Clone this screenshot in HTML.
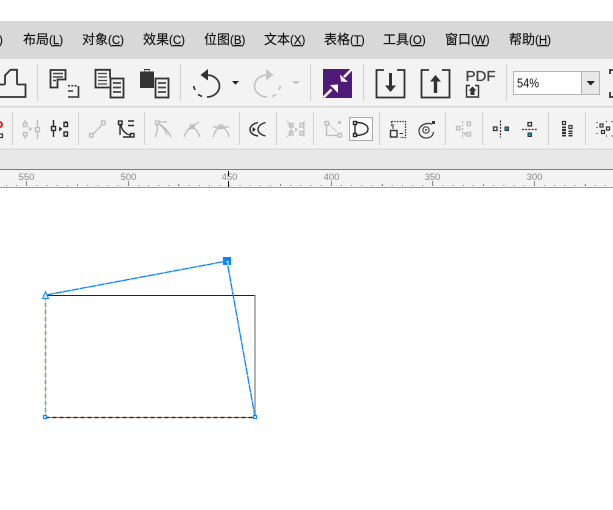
<!DOCTYPE html>
<html><head><meta charset="utf-8"><style>
html,body{margin:0;padding:0;background:#fff;width:613px;height:510px;overflow:hidden}
svg{display:block}
.m{font-family:"Liberation Sans","Noto Sans CJK SC",sans-serif;font-size:13px;fill:#111;stroke:#111;stroke-width:.15}
.l{font-size:11.5px}
.r{font-family:"Liberation Sans",sans-serif;font-size:9.5px;fill:#888;text-anchor:middle}
.kt{fill:none;stroke:#333;stroke-width:1.8}
.g{fill:none;stroke:#bcbcbc;stroke-width:1.3}
.d{fill:none;stroke:#2a2a2a;stroke-width:1.4}
.sep{stroke:#d2d2d2;stroke-width:1}
</style></head><body>
<svg width="613" height="510" viewBox="0 0 613 510" xmlns="http://www.w3.org/2000/svg">
<rect width="613" height="510" fill="#fff"/>
<rect y="21" width="613" height="38" fill="#d8d8d8"/>
<rect y="59" width="613" height="47" fill="#f3f3f3"/>
<rect y="106" width="613" height="1.5" fill="#d9d9d9"/>
<rect y="107.5" width="613" height="41" fill="#f3f3f3"/>
<rect y="148.5" width="613" height="1.5" fill="#d9d9d9"/>
<rect y="150" width="613" height="19" fill="#e8e8e8"/>
<rect y="169" width="613" height="1" fill="#00a8ee"/>
<rect y="170" width="613" height="17" fill="#f3f3f3"/>
<rect y="187" width="613" height="1" fill="#9c9c9c"/>

<!-- menu -->
<text class="m l" x="-1" y="44">)</text>
<text class="m" x="23" y="44">布局<tspan class="l" dx="0">(<tspan text-decoration="underline">L</tspan>)</tspan></text>
<text class="m" x="82" y="44">对象<tspan class="l">(<tspan text-decoration="underline">C</tspan>)</tspan></text>
<text class="m" x="143" y="44">效果<tspan class="l">(<tspan text-decoration="underline">C</tspan>)</tspan></text>
<text class="m" x="204" y="44">位图<tspan class="l">(<tspan text-decoration="underline">B</tspan>)</tspan></text>
<text class="m" x="264" y="44">文本<tspan class="l">(<tspan text-decoration="underline">X</tspan>)</tspan></text>
<text class="m" x="324" y="44">表格<tspan class="l">(<tspan text-decoration="underline">T</tspan>)</tspan></text>
<text class="m" x="383" y="44">工具<tspan class="l">(<tspan text-decoration="underline">O</tspan>)</tspan></text>
<text class="m" x="445" y="44">窗口<tspan class="l">(<tspan text-decoration="underline">W</tspan>)</tspan></text>
<text class="m" x="509" y="44">帮助<tspan class="l">(<tspan text-decoration="underline">H</tspan>)</tspan></text>

<!-- separators -->
<g class="sep">
<path d="M37.5 64V101M180.5 64V101M310.5 64V101M363.5 64V101M506.5 64V101"/>
<path d="M12.5 112V145M78.5 112V145M144.5 112V145M239.5 112V145M276.5 112V145M313.5 112V145M379.5 112V145M445.5 112V145M482.5 112V145M548.5 112V145M585.5 112V145"/>
</g>

<!-- print -->
<path class="kt" d="M5 84.500V75.500L10.500 69.800H17V84.500M0 84.500H5M17 84.500H25.500V97H0"/>
<!-- page with dotted page -->
<path class="kt" d="M50.500 70H65.500V79.500H57.500V87.500H50.500Z"/>
<path d="M53 73.500H63M53 77H63M53 80.500H56" stroke="#444" fill="none" stroke-width="1.400"/>
<path d="M68 85.800H78" fill="none" stroke="#333" stroke-width="1.500" stroke-dasharray="2 1.300"/>
<path d="M78.500 86V97H68M68 91H73" fill="none" stroke="#333" stroke-width="1.600"/>
<!-- copy -->
<path class="kt" d="M110 87.500H95.500V69.800H110V78"/>
<path d="M98 73.500H107M98 77H107M98 80.500H107M98 84H107" stroke="#444" fill="none" stroke-width="1.300"/>
<rect x="110.500" y="78.500" width="13" height="19" class="kt"/>
<path d="M113 83H121M113 87.500H121M113 92H121" stroke="#444" fill="none" stroke-width="1.800"/>
<!-- paste -->
<path d="M140 71.500H144V69H150V71.500H154V88H140Z" fill="#333"/>
<rect x="144.500" y="70" width="5" height="1.500" fill="#ddd"/>
<rect x="155.500" y="78.500" width="13" height="19" class="kt"/>
<path d="M158 83H166M158 87.500H166M158 92H166" stroke="#444" fill="none" stroke-width="1.800"/>

<!-- undo -->
<path d="M207 75A12.500 11 0 0 1 207 97" fill="none" stroke="#333" stroke-width="1.700"/>
<path d="M202 96.500L198 94.500M195 90L193.500 86" fill="none" stroke="#333" stroke-width="1.700"/>
<path d="M208 69L200.500 75L208 80.500Z" fill="#333"/>
<path d="M232 81H239L235.500 84.800Z" fill="#222"/>
<!-- redo -->
<path d="M267 75A12.500 11 0 0 0 267 97" fill="none" stroke="#c4c4c4" stroke-width="1.700"/>
<path d="M272 96.500L276 94.500M279 90L280.500 86" fill="none" stroke="#c4c4c4" stroke-width="1.700"/>
<path d="M266 69L273.500 75L266 80.500Z" fill="#c4c4c4"/>
<path d="M292 81H300L296 84.800Z" fill="#c8c8c8"/>

<!-- purple -->
<rect x="323" y="69" width="29" height="29" fill="#4f1a78"/>
<path d="M352 69L344 77M331.500 89.500L323.500 97.500" stroke="#fff" stroke-width="2.500" fill="none"/>
<path d="M341 81.500L340 74.500L348 82Z" fill="#fff"/>
<path d="M338 84.500L330 85L338 93Z" fill="#fff"/>

<!-- import/export -->
<path d="M384 70H376.500V97.500H404.500V70H397" fill="none" stroke="#333" stroke-width="1.800"/>
<path d="M390.500 73V88" stroke="#333" stroke-width="3" fill="none"/>
<path d="M385 85.500H396L390.500 92Z" fill="#333"/>
<path d="M429 70H421.500V97.500H449.500V70H442" fill="none" stroke="#333" stroke-width="1.800"/>
<path d="M435.500 80V93" stroke="#333" stroke-width="3.400" fill="none"/>
<path d="M430 81.500H441L435.500 75Z" fill="#333"/>
<!-- PDF -->
<text x="465.500" y="81" font-family="'Liberation Sans',sans-serif" font-size="15" fill="#444" stroke="#444" stroke-width=".35" textLength="30" lengthAdjust="spacingAndGlyphs">PDF</text>
<path d="M470 85.500H466.500V97H478.500V85.500H475" fill="none" stroke="#333" stroke-width="1.400"/>
<path d="M472.500 86.500L468.500 90.500H470.500V95H474.500V90.500H476.500Z" fill="#333"/>

<!-- combo -->
<rect x="513.500" y="71.500" width="86" height="23" fill="#e8e8e8" stroke="#b5b5b5"/>
<rect x="514" y="72" width="67" height="22" fill="#fff"/>
<path d="M581.500 72V94" stroke="#b5b5b5"/>
<text x="517" y="87.500" font-family="'Liberation Sans',sans-serif" font-size="13" fill="#111" textLength="22" lengthAdjust="spacingAndGlyphs">54%</text>
<path d="M586.500 81H595L590.700 85.500Z" fill="#222"/>
<path d="M613 70H610V74M610 92V97H613" fill="none" stroke="#333" stroke-width="1.800"/>

<!-- toolbar 2 -->
<circle cx="-.5" cy="124.500" r="2.500" fill="none" stroke="#e8202a" stroke-width="2"/>
<rect x="-1" y="134" width="3.500" height="3.500" fill="none" stroke="#333" stroke-width="1.200"/>

<!-- align nodes grey -->
<g class="g">
<rect x="23.500" y="123" width="3.500" height="3.500"/><rect x="23.500" y="132.500" width="3.500" height="3.500"/>
<path d="M25 120V123M25 136V139M37.500 120V139"/><rect x="35.500" y="127.500" width="4" height="4" fill="#f3f3f3"/>
</g>
<path d="M29 126.500L32.500 129L29 131.500Z" fill="#c6c6c6"/>
<g class="d">
<path d="M53.500 120V137M66 121V123M66 136V137"/>
<rect x="51.500" y="126.500" width="4" height="4" fill="#f3f3f3"/>
<rect x="64" y="122.500" width="3.500" height="4"/><rect x="64" y="132" width="3.500" height="4"/>
</g>
<path d="M59 126.500L62.500 129L59 131.500Z" fill="#333"/>

<!-- line node grey -->
<g class="g"><path d="M93 134L102 125"/><rect x="89.500" y="133.500" width="3.500" height="3.500"/><rect x="101.500" y="121" width="3.500" height="3.500"/></g>
<!-- curve node -->
<g class="d">
<rect x="118.500" y="121" width="3.500" height="3.500"/><rect x="130.500" y="133.500" width="3.500" height="3.500"/>
<path d="M120 125V135M121 125C122 131 126 134 130 135M123 137H130M128 121H134M128 125.500H134"/>
</g>
<!-- grey curve icons -->
<g class="g">
<rect x="155.500" y="121" width="3.500" height="3.500"/>
<path d="M159 122H167M159 124C165 127 169 133 171 137M157 125C158 131 156 135 155 137M160 125C164 128 166 131 167 135"/>
<rect x="190.500" y="125" width="3.500" height="3.500"/>
<path d="M184 137C186 131 190 128 192 127C195 128 198 132 200 137M188 129L199 122"/>
<rect x="219" y="125" width="3.500" height="3.500"/>
<path d="M213 137C215 131 218 127 221 127C224 127 228 131 229 137M213 127H229"/>
</g>
<!-- cusp -->
<g class="d">
<path d="M258 122.500C252 124 250 127 250 129.500C250 132 252 135 258 136"/>
<path d="M265.500 122.500C260 124 258 127 258 129.500C258 132.500 261 135 265.500 136"/>
</g>
<path d="M252.500 127L256 129.500L252.500 132Z" fill="#333"/>
<!-- extend grey -->
<g class="g">
<path d="M287 121L291 125V133L287 137M304 121V137" stroke-width="1"/>
<rect x="289.500" y="123.500" width="3.500" height="3.500"/><rect x="289.500" y="131.500" width="3.500" height="3.500"/>
<rect x="300" y="123.500" width="3.500" height="3.500"/><rect x="300" y="131.500" width="3.500" height="3.500"/>
</g>
<path d="M295 127L298 129.500L295 132Z" fill="#c6c6c6"/>
<!-- corner grey -->
<g class="g">
<rect x="325" y="121.500" width="3.500" height="3.500"/><rect x="338" y="133.500" width="3.500" height="3.500"/>
<path d="M326.500 125V135.500H338"/><path d="M329 124L338 133" stroke-dasharray="1.500 1.500"/>
</g>
<rect x="338" y="121" width="3" height="3" fill="#c6c6c6"/>
<!-- active D -->
<rect x="349.500" y="117.500" width="23" height="23" fill="#f9f9f9" stroke="#aaa"/>
<g class="d">
<rect x="353.500" y="121.500" width="3" height="3"/><rect x="353.500" y="133.500" width="3" height="3"/>
<path d="M355 124.500V133.500M356.500 122.500C363 122.500 368 125 368 129C368 133 363 135 356.500 135.500"/>
</g>
<!-- transform bbox -->
<path d="M391.500 121.500H405.500V137.500H400" fill="none" stroke="#333" stroke-width="1.300" stroke-dasharray="1.500 1.200"/>
<path d="M391.500 121.500V127" fill="none" stroke="#333" stroke-width="1.300" stroke-dasharray="1.500 1.200"/>
<rect x="390.500" y="130.500" width="6.500" height="6.500" fill="none" stroke="#333" stroke-width="1.400"/>
<path d="M393 124V129M399.500 133.500H403" stroke="#333" stroke-width="1" fill="none"/>
<!-- rotate -->
<path d="M432 124C425 122 419 126 419 131C419 135 422 138 426 138C430 138 433 136 433.500 132" fill="none" stroke="#444" stroke-width="1.300"/>
<circle cx="426" cy="130" r="3.200" fill="none" stroke="#444" stroke-width="1.200"/>
<circle cx="426" cy="130" r="1" fill="#444"/>
<rect x="432" y="121" width="3" height="3" fill="#333"/>
<!-- mirror grey -->
<g class="g">
<rect x="456.500" y="126.500" width="3.500" height="3.500"/>
<rect x="467" y="122" width="3.500" height="3.500"/><rect x="467" y="132.500" width="3.500" height="3.500"/>
<path d="M462.500 121V139" stroke-dasharray="2 1.500"/>
</g>
<path d="M466 131.500V136L463 133.800Z" fill="#c6c6c6"/>
<!-- reflect H -->
<rect x="493.500" y="127" width="3.500" height="3.500" fill="none" stroke="#333" stroke-width="1.300"/>
<rect x="505" y="127" width="3.500" height="3.500" fill="#00a0d8" stroke="#333" stroke-width="1"/>
<path d="M500.500 120.500V137.500" stroke="#333" stroke-width="1.200" stroke-dasharray="2 1.200"/>
<!-- reflect V -->
<rect x="528" y="122.500" width="3.500" height="3.500" fill="none" stroke="#333" stroke-width="1.300"/>
<rect x="528" y="133" width="3.500" height="3.500" fill="#00a0d8" stroke="#333" stroke-width="1"/>
<path d="M522 129.500H538" stroke="#333" stroke-width="1.200" stroke-dasharray="2 1.200"/>
<!-- stretch -->
<rect x="562.500" y="121.500" width="3" height="3" fill="none" stroke="#333" stroke-width="1.200"/>
<rect x="569" y="125.500" width="3" height="3" fill="none" stroke="#333" stroke-width="1.200"/>
<path d="M562 126.500H566V136.500H562ZM568.500 130.500H572.500V136.500H568.500Z" fill="#333"/>
<path d="M562 128.500H566M562 131.500H566M562 134.500H566M568.500 132.500H572.500M568.500 134.500H572.500" stroke="#f3f3f3" stroke-width="0.700"/>
<!-- scatter -->
<g fill="none" stroke="#333" stroke-width="1.200">
<rect x="600" y="124" width="3" height="3"/><rect x="606.500" y="127" width="3" height="3"/><rect x="601.500" y="130.500" width="3" height="3"/>
<path d="M597 122V123M597 127V128M597 133V134M606 121.500H607M611.500 121.500H612.500M611.500 136H612.500M606 136H607" stroke-width="1.200"/>
</g>

<!-- ruler -->
<path d="M0 185.500H613" stroke="#8a8a8a" stroke-width="1" stroke-dasharray="1 9.150" stroke-dashoffset="-6"/>
<path d="M26.500 181V186M128.500 181V186M331.500 181V186M432.500 181V186M534.500 181V186M77.500 184V186M178.500 184V186M280.500 184V186M382.500 184V186M483.500 184V186M585.500 184V186" stroke="#8a8a8a" stroke-width="1" fill="none"/>
<text class="r" x="26.500" y="180">550</text>
<text class="r" x="128.500" y="180">500</text>
<text class="r" x="229.500" y="180">450</text>
<text class="r" x="331.500" y="180">400</text>
<text class="r" x="432.500" y="180">350</text>
<text class="r" x="534.500" y="180">300</text>
<path d="M228.500 171V176M228.500 181V187" stroke="#111" stroke-width="1" fill="none"/>

<!-- canvas -->
<path d="M45.500 295.500H255.500" stroke="#222" stroke-width="1" fill="none"/>
<path d="M255 295.500V417" stroke="#999" stroke-width="1.500" fill="none"/>
<path d="M45.500 296V417" stroke="#a8e6bb" stroke-width="1.500" fill="none"/>
<path d="M45.500 296V417" stroke="#999" stroke-width="1.500" fill="none" stroke-dasharray="4 3"/>
<path d="M45.500 417.500H255.500" stroke="#c87a3a" stroke-width="1.200" fill="none"/>
<path d="M45.500 417.500H255.500" stroke="#222" stroke-width="1.200" fill="none" stroke-dasharray="4 3"/>
<path d="M46 295L227 261L255 417" stroke="#0a84ff" stroke-width="1.300" fill="none" stroke-dasharray="8 .6"/>
<rect x="223" y="257" width="8" height="8" fill="#0a84ff"/>
<path d="M226.500 261.500H228V265" stroke="#fff" stroke-width="1" fill="none"/>
<path d="M45.500 291.500L42.500 298.500H48.500Z" fill="#d6e8ff" stroke="#1e8cf0" stroke-width="1"/>
<rect x="43.500" y="415.500" width="3" height="3" fill="#fff" stroke="#0a84ff" stroke-width="1.200"/>
<rect x="253.500" y="415.500" width="3" height="3" fill="#fff" stroke="#0a84ff" stroke-width="1.200"/>
</svg>
</body></html>
